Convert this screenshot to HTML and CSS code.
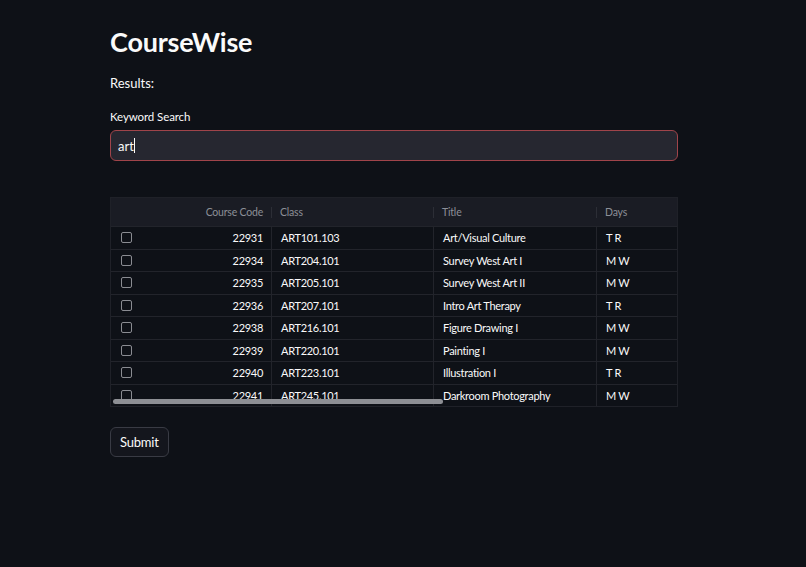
FILE: index.html
```html
<!DOCTYPE html>
<html>
<head>
<meta charset="utf-8">
<link rel="stylesheet" href="styles.css">
</head>
<body>
<main class="page">
  <h1 class="title">CourseWise</h1>
  <p class="results">Results:</p>
  <label class="label">Keyword Search</label>
  <div class="input"><span class="input-text">art</span><span class="caret"></span></div>
  <div class="table">
    <div class="row head">
      <div class="cell chk"></div>
      <div class="cell num">Course Code</div>
      <div class="cell sep">Class</div>
      <div class="cell sep">Title</div>
      <div class="cell sep">Days</div>
    </div>
    <div class="row"><div class="cell chk"><span class="box"></span></div><div class="cell num">22931</div><div class="cell v">ART101.103</div><div class="cell v">Art/Visual Culture</div><div class="cell v">T R</div></div>
    <div class="row"><div class="cell chk"><span class="box"></span></div><div class="cell num">22934</div><div class="cell v">ART204.101</div><div class="cell v">Survey West Art I</div><div class="cell v">M W</div></div>
    <div class="row"><div class="cell chk"><span class="box"></span></div><div class="cell num">22935</div><div class="cell v">ART205.101</div><div class="cell v">Survey West Art II</div><div class="cell v">M W</div></div>
    <div class="row"><div class="cell chk"><span class="box"></span></div><div class="cell num">22936</div><div class="cell v">ART207.101</div><div class="cell v">Intro Art Therapy</div><div class="cell v">T R</div></div>
    <div class="row"><div class="cell chk"><span class="box"></span></div><div class="cell num">22938</div><div class="cell v">ART216.101</div><div class="cell v">Figure Drawing I</div><div class="cell v">M W</div></div>
    <div class="row"><div class="cell chk"><span class="box"></span></div><div class="cell num">22939</div><div class="cell v">ART220.101</div><div class="cell v">Painting I</div><div class="cell v">M W</div></div>
    <div class="row"><div class="cell chk"><span class="box"></span></div><div class="cell num">22940</div><div class="cell v">ART223.101</div><div class="cell v">Illustration I</div><div class="cell v">T R</div></div>
    <div class="row last"><div class="cell chk"><span class="box"></span></div><div class="cell num">22941</div><div class="cell v">ART245.101</div><div class="cell v">Darkroom Photography</div><div class="cell v">M W</div></div>
    <div class="scrollbar"></div>
  </div>
  <button class="submit">Submit</button>
</main>
</body>
</html>
```
FILE: styles.css
```css
html, body {
  margin: 0;
  padding: 0;
  background: #0e1117;
}
body {
  font-family: Lato, "Noto Sans", sans-serif;
  color: #fafafa;
  width: 806px;
  height: 567px;
  overflow: hidden;
}
.page {
  width: 568px;
  margin-left: 110px;
  padding-top: 25px;
  display: flex;
  flex-direction: column;
}
.title {
  margin: 0;
  font-size: 27px;
  font-weight: 700;
  line-height: 34px;
  letter-spacing: -0.2px;
}
.results {
  margin: 15px 0 0;
  font-size: 13px;
  line-height: 18px;
}
.label {
  margin-top: 17px;
  font-size: 11.5px;
  line-height: 16px;
  letter-spacing: -0.1px;
}
.input {
  margin-top: 5px;
  height: 29px;
  border: 1px solid #a0444a;
  border-radius: 6px;
  background: #262730;
  display: flex;
  align-items: center;
  padding-left: 7px;
  font-size: 13px;
}
.caret {
  width: 1px;
  height: 15px;
  background: #fafafa;
}
.table {
  position: relative;
  margin-top: 36px;
  border: 1px solid #1f2128;
  display: flex;
  flex-direction: column;
}
.row {
  display: grid;
  grid-template-columns: 60px 100px 162px 163px 1fr;
  height: 22.5px;
  border-top: 1px solid #22242b;
  box-sizing: border-box;
  font-size: 11px;
  letter-spacing: -0.3px;
}
.row.head {
  height: 28px;
  border-top: none;
  background: #1a1c24;
  color: #8c8f97;
  font-size: 10.5px;
  letter-spacing: -0.2px;
}
.cell {
  display: flex;
  align-items: center;
  padding: 0 9px;
  white-space: nowrap;
  overflow: hidden;
}
.cell.num {
  justify-content: flex-end;
  padding-right: 8px;
}
.cell.v {
  border-left: 1px solid #22242b;
}
.cell.sep {
  position: relative;
}
.cell.sep::before {
  content: "";
  position: absolute;
  left: 0;
  top: 9px;
  height: 11px;
  width: 1px;
  background: #2c2e36;
}
.chk {
  padding-left: 10px;
}
.box {
  width: 9px;
  height: 9px;
  border: 1.5px solid #8a8c92;
  border-radius: 2px;
}
.scrollbar {
  position: absolute;
  left: 2px;
  bottom: 2px;
  width: 330px;
  height: 5px;
  border-radius: 3px;
  background: #8d8f94;
}
.submit {
  align-self: flex-start;
  margin-top: 20px;
  height: 30px;
  padding: 0 9px;
  border: 1px solid #393b44;
  border-radius: 6px;
  background: #14161d;
  color: #fafafa;
  font-family: Lato, "Noto Sans", sans-serif;
  font-size: 13px;
  letter-spacing: -0.2px;
}
```
